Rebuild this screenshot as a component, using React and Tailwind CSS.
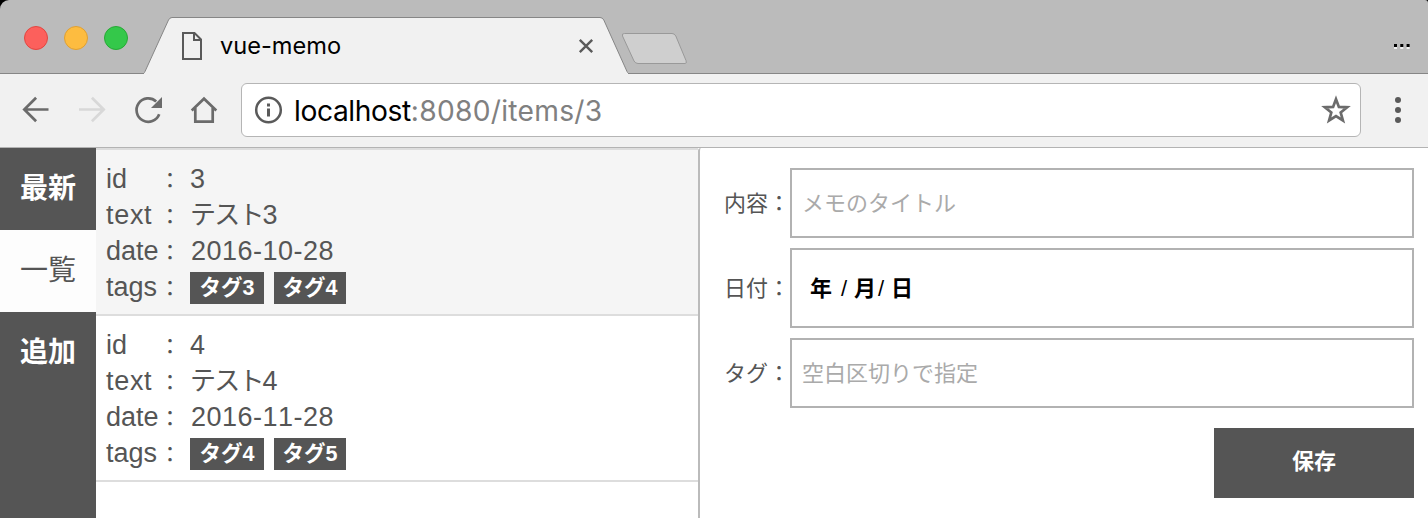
import React from "react";

function Ink({ children, className, ...rest }) {
  return (
    <svg fill="none" className={className} {...rest}>
      {children}
    </svg>
  );
}

function TabStrip() {
  return (
    <div className="flex h-[74px] bg-black">
      <div className="flex w-full rounded-tl-[9px] rounded-tr-[3px] bg-[#bbbbbb]">
        <div className="flex w-[144px] items-center gap-4 border-b border-[#868686] pl-6">
          <span className="mt-[3px] size-6 rounded-full border border-[#e24640] bg-[#fc605c]" />
          <span className="mt-[3px] size-6 rounded-full border border-[#dfa033] bg-[#fdbc40]" />
          <span className="mt-[3px] size-6 rounded-full border border-[#27a935] bg-[#34c84a]" />
        </div>
        <div className="grid w-[484px]">
          <Ink className="col-start-1 row-start-1" width="484" height="74" viewBox="144 0 484 74">
            <path d="M144 74V73.5L168.5 20Q169.8 17.5 172 17.5H600Q602.5 17.5 603.8 20L627 71.5Q628 73.5 630 73.5V74Z" fill="#f1f1f1" />
            <path d="M142 73.5Q144 73.5 145 71.5L168.5 20Q169.8 17.5 172 17.5H600Q602.5 17.5 603.8 20L627 71.5Q628 73.5 630 73.5" stroke="#868686" />
          </Ink>
          <div className="col-start-1 row-start-1 flex items-center pl-[37px] pr-[34px] pt-[18px]">
            <Ink width="22" height="30" viewBox="181 31 22 30">
              <path d="M183 33H194.5L201 39.5V59H183Z M194 33V40H201" stroke="#5a5a5a" strokeWidth="2" />
            </Ink>
            <span className="ml-[17px] font-[Inter,sans-serif] text-[23.6px] leading-[30px] text-black">vue-memo</span>
            <Ink className="ml-auto" width="16" height="16" viewBox="578 38 16 16">
              <path d="M579.8 39.8L592.2 52.2M592.2 39.8L579.8 52.2" stroke="#5a5a5a" strokeWidth="2.4" />
            </Ink>
          </div>
        </div>
        <div className="flex flex-1 items-center justify-between border-b border-[#868686] pr-4">
          <Ink className="-ml-2 mt-6" width="78" height="36" viewBox="620 31 78 36">
            <path d="M624.5 33.5H672Q674.5 33.5 675.8 36L686 60.5Q687.2 63.5 685 63.5H638Q635.5 63.5 634 61L622.5 36Q621.5 33.5 624.5 33.5Z" fill="#cfcfcf" stroke="#999" />
          </Ink>
          <Ink className="mt-[18px]" width="20" height="8" viewBox="1392 43 20 8">
            <path d="M1394 48h3v2h-3zM1400.3 48h3v2h-3zM1406.6 48h3v2h-3z" fill="#f1f1f1" />
            <path d="M1394 45h3v3h-3zM1400.3 45h3v3h-3zM1406.6 45h3v3h-3z" fill="#000" />
          </Ink>
        </div>
      </div>
    </div>
  );
}

function Toolbar() {
  return (
    <div className="flex h-[74px] items-center border-b border-[#b3b3b3] bg-[#f1f1f1] pb-px pl-5">
      <Ink width="56" height="32" viewBox="20 94 56 32">
        <path d="M48.500 109.5H24.500M36.1 97.7L24.3 109.5L36.1 121.3" stroke="#6b6b6b" strokeWidth="2.7" />
      </Ink>
      <Ink width="56" height="32" viewBox="76 94 56 32">
        <path d="M79 109.5H103M91.9 97.7L103.7 109.5L91.9 121.3" stroke="#d8d8d8" strokeWidth="2.7" />
      </Ink>
      <Ink width="56" height="32" viewBox="132 94 56 32">
        <path d="M156.2 101.5A11.7 11.7 0 1 0 159.2 114.2" stroke="#6b6b6b" strokeWidth="2.7" />
        <path d="M162 97V108H151Z" fill="#6b6b6b" />
      </Ink>
      <Ink width="53" height="32" viewBox="188 94 53 32">
        <path d="M191.7 110.4L204 98.7L216.3 110.4M195.3 108V121.7H212.7V108" stroke="#6b6b6b" strokeWidth="2.7" />
      </Ink>
      <div className="flex h-[54px] w-[1120px] items-center rounded-[6px] border border-[#b5b5b5] bg-white pl-3 pr-[9px]">
        <Ink width="30" height="30" viewBox="254 95.5 30 30">
          <circle cx="268.5" cy="110.5" r="12.3" stroke="#5a5a5a" strokeWidth="2.5" />
          <path d="M267 104h3v3h-3zM267 109h3v8h-3z" fill="#5a5a5a" />
        </Ink>
        <span className="ml-[10px] mt-px font-[Inter,sans-serif] text-[28.2px] leading-[36px] text-[#808080]">
          <span className="tracking-[-0.4px] text-black">localhost</span>
          <span className="tracking-[0.27px]">:8080/items/3</span>
        </span>
        <Ink className="ml-auto" width="30" height="30" viewBox="1321 95 30 30">
          <path d="M1336 99.2L1338.9 106.9L1347.2 107.3L1340.7 112.5L1342.9 120.5L1336 116L1329.1 120.5L1331.3 112.5L1324.8 107.3L1333.1 106.9Z" stroke="#6b6b6b" strokeWidth="2.7" />
        </Ink>
      </div>
      <Ink className="ml-[31px]" width="12" height="32" viewBox="1392 94 12 32">
        <g fill="#5a5a5a">
          <circle cx="1398" cy="100" r="3" />
          <circle cx="1398" cy="110" r="3" />
          <circle cx="1398" cy="120" r="3" />
        </g>
      </Ink>
    </div>
  );
}

function Field({ label, tracking, children }) {
  return (
    <div className="flex h-9">
      <dt className="flex w-[84px]">
        <span className={"w-[52px] whitespace-nowrap " + (tracking || "")}>{label}</span>
        <span className="-mt-px w-[24px] text-center font-['Noto_Sans_CJK_JP',sans-serif] text-[22px]">：</span>
      </dt>
      <dd className="flex">{children}</dd>
    </div>
  );
}

function Memo({ id, text, n, date, tags, active }) {
  return (
    <dl
      className={
        (active ? "bg-[#f5f5f5] " : "bg-white ") +
        "h-[166px] border-b-2 border-[#dddddd] px-[10px] py-[11px] text-[27px] leading-9 text-[#555] [font-kerning:none]"
      }
    >
      <Field label="id">{id}</Field>
      <Field label="text" tracking="tracking-[0.7px]">
        <span className="text-[26px] tracking-[-1.8px]">{text}</span>
        {n}
      </Field>
      <Field label="date">
        <span className="ml-px tracking-[0.5px]">{date}</span>
      </Field>
      <Field label="tags">
        <span className="mt-[3px] flex gap-[10px] text-[21.5px] font-bold leading-[32px] text-white">
          {tags.map((t, i) => (
            <span key={t} className={(i ? "w-[72px]" : "w-[74px]") + " flex h-8 justify-center bg-[#555]"}>
              {t}
            </span>
          ))}
        </span>
      </Field>
    </dl>
  );
}

function Row({ label, tall, children }) {
  return (
    <label className={(tall ? "h-20" : "h-[70px]") + " flex items-center text-[22px] text-[#555]"}>
      <span className="w-[66px] whitespace-nowrap">{label}：</span>
      <span className="flex h-full w-[624px] items-center border-2 border-[#b2b2b2] bg-white px-[10px] text-[22px]">
        {children}
      </span>
    </label>
  );
}

export default function App() {
  return (
    <div className="flex h-[518px] w-[1428px] flex-col overflow-hidden bg-white font-['Liberation_Sans','Noto_Sans_CJK_JP',sans-serif]">
      <TabStrip />
      <Toolbar />
      <div className="flex h-[370px]">
        <nav className="flex w-24 flex-col bg-[#555] text-center text-[28px] font-bold leading-[82px] text-white">
          <a className="h-[82px]">最新</a>
          <a className="h-[82px] bg-[#fdfdfd] font-normal text-[#555]">一覧</a>
          <a className="h-[82px]">追加</a>
        </nav>
        <section className="w-[602px] border-t-2 border-[#dddddd]">
          <Memo id="3" text="テスト" n="3" date="2016-10-28" tags={["タグ3", "タグ4"]} active />
          <Memo id="4" text="テスト" n="4" date="2016-11-28" tags={["タグ4", "タグ5"]} />
        </section>
        <form className="flex flex-1 flex-col gap-[10px] rounded-tl-[3px] border-l-2 border-[#bbbbbb] pl-6 pt-5">
          <Row label="内容">
            <span className="text-[#aaa]">メモのタイトル</span>
          </Row>
          <Row label="日付" tall>
            <span className="flex pl-2 font-bold text-black">
              <span className="w-[31px]">年</span>
              <span className="w-[13px] font-medium">/</span>
              <span className="w-[24px]">月</span>
              <span className="w-[13px] font-medium">/</span>
              <span>日</span>
            </span>
          </Row>
          <Row label="タグ">
            <span className="text-[#aaa]">空白区切りで指定</span>
          </Row>
          <button type="button" className="ml-[490px] mt-[10px] h-[70px] w-[200px] bg-[#555] pb-[3px] text-[22px] font-bold text-white">
            保存
          </button>
        </form>
      </div>
    </div>
  );
}
